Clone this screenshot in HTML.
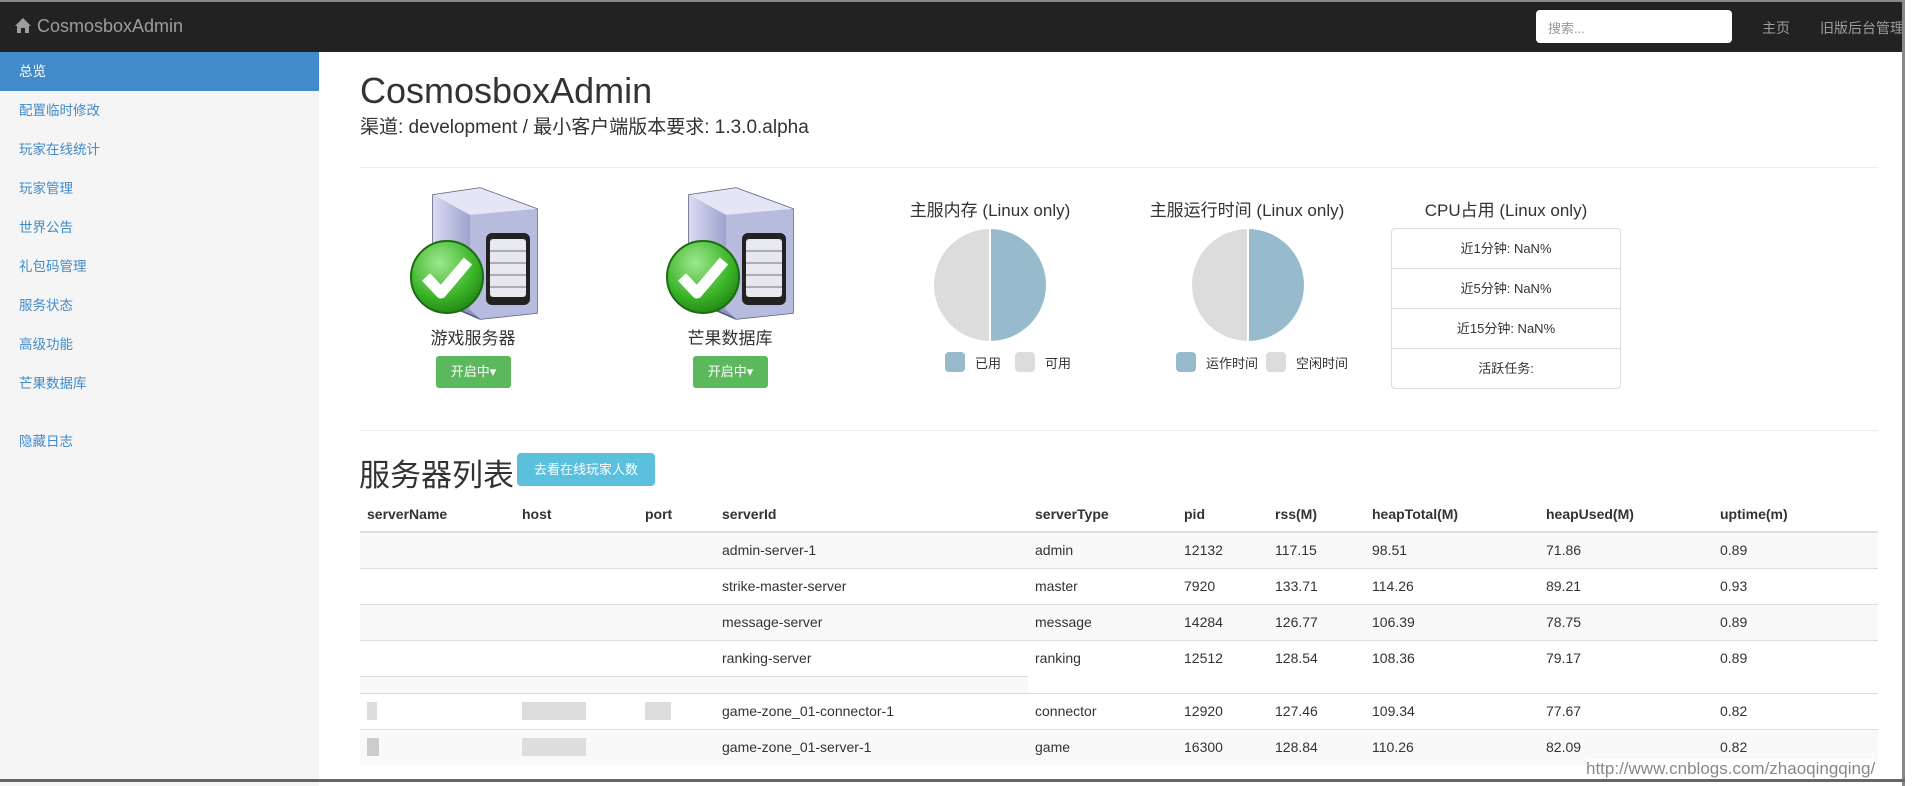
<!DOCTYPE html>
<html><head><meta charset="utf-8">
<style>
*{box-sizing:border-box;margin:0;padding:0}
body{width:1914px;height:786px;overflow:hidden;background:#fff;font-family:"Liberation Sans","Noto Sans CJK SC",sans-serif;color:#333;position:relative}
.nav{position:absolute;left:0;top:0;width:1902px;height:52px;background:#222;border-top:2px solid #888}
.brand{position:absolute;left:14px;top:14px;color:#9d9d9d;font-size:18px}
.search{position:absolute;left:1536px;top:8px;width:196px;height:33px;background:#fff;border-radius:4px;color:#999;font-size:13px;padding:8px 12px}
.nl{position:absolute;top:16px;color:#9d9d9d;font-size:14px;white-space:nowrap}
.side{position:absolute;left:0;top:52px;width:319px;height:734px;background:#f5f5f5}
.side div{height:39px;line-height:39px;padding-left:19px;font-size:13.5px;color:#428bca}
.side .act{background:#428bca;color:#fff}
.abs{position:absolute}
h1{position:absolute;left:360px;top:70px;font-size:36px;font-weight:normal;color:#333}
.sub{position:absolute;left:360px;top:112px;font-size:19px;color:#333}
.hr{position:absolute;left:360px;width:1518px;height:1px;background:#eee}
.lbl{position:absolute;font-size:17px;text-align:center;width:200px}
.btn{position:absolute;width:75px;height:32px;background:#5cb85c;border-radius:3px;color:#fff;font-size:13px;text-align:center;line-height:32px}
.pt{position:absolute;font-size:17px;text-align:center;width:260px}
.lg{position:absolute;font-size:13px;display:flex;align-items:center}
.sw{width:20px;height:20px;border-radius:4px;display:inline-block;margin-right:10px}
.cpu{position:absolute;left:1391px;top:228px;width:230px;height:161px;border:1px solid #ddd;border-radius:4px}
.cpu div{height:40px;line-height:40px;text-align:center;font-size:13px;border-bottom:1px solid #ddd}
.cpu div:last-child{border-bottom:none}
table{position:absolute;left:360px;top:496px;width:1518px;border-collapse:collapse;font-size:14px}
th{text-align:left;height:36px;border-bottom:2px solid #ddd;padding-left:7px;font-weight:bold}
td{height:36px;padding-left:7px;border-top:1px solid #ddd}
tr.s td{background:#f9f9f9}
.blur{display:inline-block;background:#ddd;height:18px;vertical-align:middle}
</style></head><body>
<div class="nav">
<div class="brand"><svg width="18" height="17" viewBox="0 0 18 17" style="vertical-align:-2px"><path d="M9 1 L1 9 H3 V16 H7 V11 H11 V16 H15 V9 H17 Z" fill="#9d9d9d"/></svg> CosmosboxAdmin</div>
<div class="search">搜索...</div>
<div class="nl" style="left:1762px">主页</div>
<div class="nl" style="left:1820px">旧版后台管理</div>
</div>
<div class="side">
<div class="act">总览</div><div>配置临时修改</div><div>玩家在线统计</div><div>玩家管理</div><div>世界公告</div><div>礼包码管理</div><div>服务状态</div><div>高级功能</div><div>芒果数据库</div><div style="margin-top:19px">隐藏日志</div>
</div>
<div class="abs" style="left:1902px;top:0;width:3px;height:786px;background:#888"></div>
<div class="abs" style="left:0;top:779px;width:1905px;height:3px;background:#666"></div>
<h1>CosmosboxAdmin</h1>
<div class="sub">渠道: development / 最小客户端版本要求: 1.3.0.alpha</div>
<div class="hr" style="top:167px"></div>

<svg class="abs" style="left:410px;top:185px" width="135" height="140" viewBox="0 0 135 140">
<defs><linearGradient id="lf" x1="0" x2="1"><stop offset="0" stop-color="#d8dcf2"/><stop offset="1" stop-color="#9da3cc"/></linearGradient>
<radialGradient id="gc" cx=".4" cy=".3" r=".8"><stop offset="0" stop-color="#9fe88f"/><stop offset=".6" stop-color="#3cb528"/><stop offset="1" stop-color="#1a7a10"/></radialGradient></defs>
<path d="M23 10 L70 3 L127 24 L127 128 L70 134 L23 114 Z" fill="#8d92be" stroke="#555a7a" stroke-width="1.5"/>
<path d="M23 10 L70 3 L127 24 L60 30 Z" fill="#e4e6f6"/>
<path d="M23 10 L60 30 L60 125 L23 114 Z" fill="url(#lf)"/>
<path d="M60 30 L127 24 L127 128 L70 134 L60 125 Z" fill="#b7bbdd"/>
<rect x="76" y="48" width="44" height="72" rx="6" fill="#222"/>
<rect x="80" y="54" width="36" height="58" rx="3" fill="#e8e8f0"/>
<path d="M80 66H116M80 78H116M80 90H116M80 102H116" stroke="#999" stroke-width="1.5"/>
<circle cx="37" cy="92" r="36" fill="url(#gc)" stroke="#1d6a12" stroke-width="2"/>
<path d="M16 92 L31 108 L58 76" fill="none" stroke="#fff" stroke-width="11" stroke-linejoin="round"/>
</svg>
<svg class="abs" style="left:666px;top:185px" width="135" height="140" viewBox="0 0 135 140">
<path d="M23 10 L70 3 L127 24 L127 128 L70 134 L23 114 Z" fill="#8d92be" stroke="#555a7a" stroke-width="1.5"/>
<path d="M23 10 L70 3 L127 24 L60 30 Z" fill="#e4e6f6"/>
<path d="M23 10 L60 30 L60 125 L23 114 Z" fill="url(#lf)"/>
<path d="M60 30 L127 24 L127 128 L70 134 L60 125 Z" fill="#b7bbdd"/>
<rect x="76" y="48" width="44" height="72" rx="6" fill="#222"/>
<rect x="80" y="54" width="36" height="58" rx="3" fill="#e8e8f0"/>
<path d="M80 66H116M80 78H116M80 90H116M80 102H116" stroke="#999" stroke-width="1.5"/>
<circle cx="37" cy="92" r="36" fill="url(#gc)" stroke="#1d6a12" stroke-width="2"/>
<path d="M16 92 L31 108 L58 76" fill="none" stroke="#fff" stroke-width="11" stroke-linejoin="round"/>
</svg>
<div class="lbl" style="left:373px;top:324px">游戏服务器</div>
<div class="lbl" style="left:630px;top:324px">芒果数据库</div>
<div class="btn" style="left:436px;top:356px">开启中▾</div>
<div class="btn" style="left:693px;top:356px">开启中▾</div>

<div class="pt" style="left:860px;top:196px">主服内存 (Linux only)</div>
<svg class="abs" style="left:933px;top:228px" width="114" height="114"><path d="M57 1 A56 56 0 0 1 57 113 Z" fill="#97bbcd"/><path d="M57 1 A56 56 0 0 0 57 113 Z" fill="#dcdcdc"/><line x1="57" y1="1" x2="57" y2="113" stroke="#fff" stroke-width="2"/></svg>
<div class="lg" style="left:945px;top:352px"><span class="sw" style="background:#97bbcd"></span>已用<span class="sw" style="background:#dcdcdc;margin-left:14px"></span>可用</div>
<div class="pt" style="left:1117px;top:196px">主服运行时间 (Linux only)</div>
<svg class="abs" style="left:1191px;top:228px" width="114" height="114"><path d="M57 1 A56 56 0 0 1 57 113 Z" fill="#97bbcd"/><path d="M57 1 A56 56 0 0 0 57 113 Z" fill="#dcdcdc"/><line x1="57" y1="1" x2="57" y2="113" stroke="#fff" stroke-width="2"/></svg>
<div class="lg" style="left:1176px;top:352px"><span class="sw" style="background:#97bbcd"></span>运作时间<span class="sw" style="background:#dcdcdc;margin-left:8px"></span>空闲时间</div>
<div class="pt" style="left:1376px;top:196px">CPU占用 (Linux only)</div>
<div class="cpu"><div>近1分钟: NaN%</div><div>近5分钟: NaN%</div><div>近15分钟: NaN%</div><div>活跃任务:</div></div>

<div class="hr" style="top:430px"></div>
<div class="abs" style="left:359px;top:450px;font-size:31px">服务器列表</div>
<div class="abs" style="left:517px;top:453px;width:138px;height:33px;background:#5bc0de;border-radius:4px;color:#fff;font-size:13px;text-align:center;line-height:33px">去看在线玩家人数</div>
<table>
<tr><th style="width:155px">serverName</th><th style="width:123px">host</th><th style="width:77px">port</th><th style="width:313px">serverId</th><th style="width:149px">serverType</th><th style="width:91px">pid</th><th style="width:97px">rss(M)</th><th style="width:174px">heapTotal(M)</th><th style="width:174px">heapUsed(M)</th><th>uptime(m)</th></tr>
<tr class="s"><td></td><td></td><td></td><td>admin-server-1</td><td>admin</td><td>12132</td><td>117.15</td><td>98.51</td><td>71.86</td><td>0.89</td></tr>
<tr><td></td><td></td><td></td><td>strike-master-server</td><td>master</td><td>7920</td><td>133.71</td><td>114.26</td><td>89.21</td><td>0.93</td></tr>
<tr class="s"><td></td><td></td><td></td><td>message-server</td><td>message</td><td>14284</td><td>126.77</td><td>106.39</td><td>78.75</td><td>0.89</td></tr>
<tr><td></td><td></td><td></td><td>ranking-server</td><td>ranking</td><td>12512</td><td>128.54</td><td>108.36</td><td>79.17</td><td>0.89</td></tr>
<tr><td colspan="4" style="height:17px;background:#f9f9f9"></td><td colspan="6" style="height:17px;border-top:none"></td></tr>
<tr><td><span class="blur" style="width:10px"></span></td><td><span class="blur" style="width:64px"></span></td><td><span class="blur" style="width:26px"></span></td><td>game-zone_01-connector-1</td><td>connector</td><td>12920</td><td>127.46</td><td>109.34</td><td>77.67</td><td>0.82</td></tr>
<tr class="s"><td><span class="blur" style="width:12px;background:#ccc"></span></td><td><span class="blur" style="width:64px"></span></td><td></td><td>game-zone_01-server-1</td><td>game</td><td>16300</td><td>128.84</td><td>110.26</td><td>82.09</td><td>0.82</td></tr>
</table>
<div class="abs" style="left:1586px;top:759px;font-size:17px;color:#888;background:#fff">http://www.cnblogs.com/zhaoqingqing/</div>
</body></html>
